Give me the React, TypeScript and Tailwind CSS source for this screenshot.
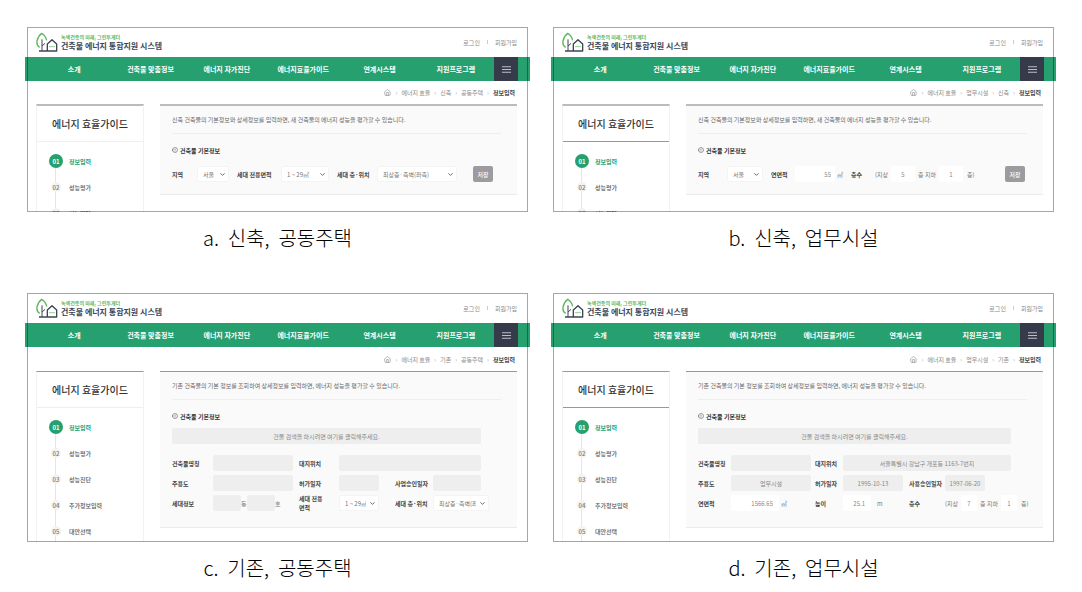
import type { ReactNode } from 'react';
import { FiChevronDown, FiHome, FiInfo, FiMenu } from 'react-icons/fi';

const NAV = ['소개', '건축물 맞춤정보', '에너지 자가진단', '에너지효율가이드', '연계시스템', '지원프로그램'];
const STEPS = ['정보입력', '성능평가', '성능진단', '추가정보입력', '대안선택'];

function Logo() {
  return (
    <svg viewBox="0 0 66 60" className="h-5 w-[22px]" fill="none" strokeWidth="4" strokeLinejoin="round">
      <path d="M11 46C4 42 2 34 3 27C5 17 10 9 17 4C25 9 30 15 32 25" stroke="#5cb85c" />
      <path d="M18 22V57M18 42L27 34" stroke="#3d4456" strokeWidth="3" />
      <path d="M9 57H62V36L48 23L34 36V57" stroke="#3d4456" />
      <path d="M40 44h16" stroke="#5cb85c" strokeWidth="3" strokeDasharray="4 2" />
    </svg>
  );
}

function Label({ children, htmlFor, className }: { children: ReactNode; htmlFor?: string; className: string }) {
  return <label htmlFor={htmlFor} className={`shrink-0 font-bold text-[#444] ${className}`}>{children}</label>;
}

// grey = value filled in by the building search, white = typed by the user
function Field({ id, label, value = '', grey, className }: {
  id: string;
  label?: string;
  value?: string;
  grey?: boolean;
  className: string;
}) {
  return (
    <input
      id={id}
      aria-label={label}
      defaultValue={value}
      readOnly={grey}
      className={`h-4 shrink-0 rounded-xs text-[#888] outline-none ${grey ? 'bg-[#eeeeee]' : 'bg-white'} ${className}`}
    />
  );
}

function Select({ id, value, className }: { id: string; value: string; className: string }) {
  return (
    <div className={`relative shrink-0 ${className}`}>
      <select id={id} className="h-4 w-full appearance-none rounded-xs border border-[#f4f4f4] bg-white pl-[5px] pr-3 text-[#777] outline-none">
        <option>{value}</option>
      </select>
      <FiChevronDown size={7} strokeWidth={3} className="pointer-events-none absolute right-[3px] top-[5px] text-[#555]" />
    </div>
  );
}

function SaveButton({ className }: { className: string }) {
  return <button className={`h-4 w-5 shrink-0 rounded-xs bg-[#9b9ba0] font-medium text-white ${className}`}>저장</button>;
}

function SearchButton({ className }: { className: string }) {
  return (
    <button className={`mb-[11px] h-4 rounded-xs bg-[#eeeeee] text-center text-[#888] ${className}`}>
      건물 검색을 하시려면 여기를 클릭해주세요.
    </button>
  );
}

function Row({ children }: { children: ReactNode }) {
  return <div className="flex h-4 items-center">{children}</div>;
}

function Unit({ children, className }: { children: ReactNode; className: string }) {
  return <span className={`shrink-0 whitespace-nowrap text-[#777] ${className}`}>{children}</span>;
}

function NewHousing() {
  return (
    <Row>
      <Label htmlFor="a-region" className="w-[25px]">지역</Label>
      <Select id="a-region" value="서울" className="w-8" />
      <Label htmlFor="a-area" className="ml-2 w-11">세대 전용면적</Label>
      <Select id="a-area" value="1 ~ 29㎡" className="w-12" />
      <Label htmlFor="a-floor" className="ml-2 w-10">세대 층·위치</Label>
      <Select id="a-floor" value="최상층·측벽(좌측)" className="w-20" />
      <SaveButton className="ml-4" />
    </Row>
  );
}

function NewOffice() {
  return (
    <Row>
      <Label htmlFor="b-region" className="w-[29px]">지역</Label>
      <Select id="b-region" value="서울" className="w-9" />
      <Label htmlFor="b-area" className="ml-2 w-6">연면적</Label>
      <Field id="b-area" value="55" className="w-10 pr-1 text-right" />
      <Unit className="w-4 pl-0.5">㎡</Unit>
      <Label htmlFor="b-up" className="w-6">층수</Label>
      <Unit className="w-4">(지상</Unit>
      <Field id="b-up" value="5" className="w-6 text-center" />
      <Unit className="w-6 text-center">층 지하</Unit>
      <Field id="b-down" label="지하 층수" value="1" className="w-6 text-center" />
      <Unit className="w-6 pl-1">층)</Unit>
      <SaveButton className="ml-[18px]" />
    </Row>
  );
}

function OldHousing() {
  return (
    <>
      <SearchButton className="w-[309px]" />
      <div className="flex flex-col gap-1">
        <Row>
          <Label htmlFor="c-name" className="w-[41px]">건축물명칭</Label>
          <Field id="c-name" grey className="w-20" />
          <Label htmlFor="c-place" className="ml-1.5 w-10">대지위치</Label>
          <Field id="c-place" grey className="w-[142px]" />
        </Row>
        <Row>
          <Label htmlFor="c-use" className="w-[41px]">주용도</Label>
          <Field id="c-use" grey className="w-20" />
          <Label htmlFor="c-permit" className="ml-1.5 w-10">허가일자</Label>
          <Field id="c-permit" grey className="w-10" />
          <Label htmlFor="c-approve" className="ml-4 w-[38px]">사업승인일자</Label>
          <Field id="c-approve" grey className="w-12" />
        </Row>
        <Row>
          <Label htmlFor="c-dong" className="w-[41px]">세대정보</Label>
          <Field id="c-dong" grey className="w-7" />
          <Unit className="w-1.5">동</Unit>
          <Field id="c-ho" label="호" grey className="w-7" />
          <Unit className="w-6">호</Unit>
          <Label htmlFor="c-area" className="w-10 leading-[9px]">세대 전용<br />면적</Label>
          <Select id="c-area" value="1 ~ 29㎡" className="w-10" />
          <Label htmlFor="c-floor" className="ml-4 w-[38px]">세대 층·위치</Label>
          <Select id="c-floor" value="최상층·측벽(좌" className="w-14" />
        </Row>
      </div>
    </>
  );
}

function OldOffice() {
  return (
    <>
      <SearchButton className="w-[313px]" />
      <div className="flex flex-col gap-1">
        <Row>
          <Label htmlFor="d-name" className="w-[33px]">건축물명칭</Label>
          <Field id="d-name" grey className="w-20" />
          <Label htmlFor="d-place" className="ml-1 w-7">대지위치</Label>
          <Field id="d-place" grey value="서울특별시 강남구 개포동 1163-7번지" className="w-[168px] text-center" />
        </Row>
        <Row>
          <Label htmlFor="d-use" className="w-[33px]">주용도</Label>
          <Field id="d-use" grey value="업무시설" className="w-20 text-center" />
          <Label htmlFor="d-permit" className="ml-1 w-7">허가일자</Label>
          <Field id="d-permit" grey value="1995-10-13" className="w-[60px] text-center" />
          <Label htmlFor="d-approve" className="ml-1.5 w-9">사용승인일자</Label>
          <Field id="d-approve" grey value="1997-06-20" className="w-10 text-center" />
        </Row>
        <Row>
          <Label htmlFor="d-area" className="w-[33px]">연면적</Label>
          <Field id="d-area" value="1566.65" className="w-12 pr-1.5 text-right" />
          <Unit className="w-8 pl-0.5">㎡</Unit>
          <Label htmlFor="d-height" className="ml-1 w-7">높이</Label>
          <Field id="d-height" value="25.1" className="w-7 pr-1.5 text-right" />
          <Unit className="w-8 pl-1.5">m</Unit>
          <Label htmlFor="d-up" className="ml-1.5 w-9">층수</Label>
          <Unit className="w-4">(지상</Unit>
          <Field id="d-up" value="7" className="w-4 text-center" />
          <Unit className="w-6 text-center">층 지하</Unit>
          <Field id="d-down" label="지하 층수" value="1" className="w-4 text-center" />
          <Unit className="pl-1">층)</Unit>
        </Row>
      </div>
    </>
  );
}

function Screen({ caption, crumbs, intro, tall, darkRule, children }: {
  caption: string;
  crumbs: string[];
  intro: string;
  tall?: boolean;
  darkRule?: boolean;
  children: ReactNode;
}) {
  const topRule = tall ? 'border-t border-t-[#999]' : 'border-t-2 border-t-[#bbb]';

  return (
    <figure>
      <div className={`relative flex flex-col ${tall ? 'h-[249px]' : 'h-[185px]'}`}>
        <header className="flex h-[30px] shrink-0 items-center justify-between pl-[9px] pr-[11px]">
          <div className="flex items-center gap-[3px]">
            <Logo />
            <div className="font-bold">
              <p className="text-[5px] leading-[8px] text-[#5cb85c]">녹색건축의 미래, 그린투게더</p>
              <p className="text-[8px] leading-[10px] text-[#3d4456]">건축물 에너지 통합지원 시스템</p>
            </div>
          </div>
          <div className="flex items-center gap-[7px] text-[#888]">
            <a href="#login">로그인</a>
            <span className="h-1 w-px bg-[#ccc]" />
            <a href="#join">회원가입</a>
          </div>
        </header>
        <nav className="-mx-0.5 flex h-6 shrink-0 items-center bg-[#26a06e] pl-[11px] pr-3">
          <div className="grid flex-1 grid-cols-6 text-center text-[7px] font-bold text-white">
            {NAV.map((item) => <a key={item} href="#nav" className="whitespace-nowrap">{item}</a>)}
          </div>
          <button aria-label="전체메뉴" className="flex size-6 items-center justify-center bg-[#363b4a] text-[#c8cad0]">
            <FiMenu size={11} />
          </button>
        </nav>
        <div className="min-h-0 flex-1 overflow-hidden pl-[9px] pr-[11px]">
          <div className={`flex items-center justify-end gap-1 pr-0.5 text-[#888] ${tall ? 'h-6' : 'h-[23px]'}`}>
            <FiHome size={7} className="mr-px" />
            {crumbs.map((crumb) => (
              <span key={crumb} className="flex gap-1"><span className="text-[#aaa]">›</span>{crumb}</span>
            ))}
            <span className="text-[#aaa]">›</span>
            <b className="text-[#444]">정보입력</b>
          </div>
          <div className="flex items-start gap-4">
            <aside className={`w-[108px] shrink-0 border-x border-x-[#f2f2f2] ${topRule}`}>
              <h2 className={`flex h-9 items-center justify-center border-b text-[10px] font-medium text-[#333] ${darkRule ? 'border-[#999]' : 'border-[#eee]'}`}>
                에너지 효율가이드
              </h2>
              <ol className="relative flex flex-col pl-3 pt-1.5">
                <li aria-hidden className="absolute bottom-0 left-[18px] top-5 w-px bg-[#e5e5e5]" />
                {STEPS.map((step, i) => (
                  <li key={step} className="relative flex h-[26px] items-center gap-1.5 font-medium">
                    <span className="flex w-3.5 justify-center">
                      <span className={`flex shrink-0 items-center justify-center rounded-full ${i === 0 ? 'size-3.5 bg-[#26a06e] font-bold text-white' : 'size-2.5 bg-[#f3f3f3] text-[#777]'}`}>
                        0{i + 1}
                      </span>
                    </span>
                    <a href="#step" className={i === 0 ? 'font-bold text-[#26a06e]' : 'text-[#555]'}>{step}</a>
                  </li>
                ))}
              </ol>
            </aside>
            <section className={`min-w-0 flex-1 border-b border-b-[#eaeaea] bg-[#fafafa] pl-3 ${topRule} ${tall ? 'pb-4' : 'pb-3'}`}>
              <p className="mr-4 flex h-7 items-center border-b border-[#eee] text-[#666]">{intro}</p>
              <h3 className={`flex items-center gap-0.5 font-bold text-[#333] ${tall ? 'h-7 pt-1' : 'h-8'}`}>
                <FiInfo size={6} className="rotate-180 text-[#444]" />건축물 기본정보
              </h3>
              {children}
            </section>
          </div>
        </div>
        <div className="pointer-events-none absolute inset-0 border border-black/35" />
      </div>
      <figcaption className="mt-3 whitespace-pre text-center text-[20px] font-light leading-7 text-black">{caption}</figcaption>
    </figure>
  );
}

export default function App() {
  return (
    <main className="min-h-screen bg-white pl-[27px] pr-7 pt-[27px] font-['Noto_Sans_CJK_KR',sans-serif] text-[6px] leading-[9px]">
      <div className="grid grid-cols-2 gap-x-[25px] gap-y-[41px]">
        <Screen
          caption="a.  신축,  공동주택"
          crumbs={['에너지 효율', '신축', '공동주택']}
          intro="신축 건축물의 기본정보와 상세정보를 입력하면, 새 건축물의 에너지 성능을 평가할 수 있습니다."
        >
          <NewHousing />
        </Screen>
        <Screen
          caption="b.  신축,  업무시설"
          crumbs={['에너지 효율', '업무시설', '신축']}
          intro="신축 건축물의 기본정보와 상세정보를 입력하면, 새 건축물의 에너지 성능을 평가할 수 있습니다."
          darkRule
        >
          <NewOffice />
        </Screen>
        <Screen
          caption="c.  기존,  공동주택"
          crumbs={['에너지 효율', '기존', '공동주택']}
          intro="기존 건축물의 기본 정보를 조회하여 상세정보를 입력하면, 에너지 성능을 평가할 수 있습니다."
          tall
        >
          <OldHousing />
        </Screen>
        <Screen
          caption="d.  기존,  업무시설"
          crumbs={['에너지 효율', '업무시설', '기존']}
          intro="기존 건축물의 기본 정보를 조회하여 상세정보를 입력하면, 에너지 성능을 평가할 수 있습니다."
          tall
          darkRule
        >
          <OldOffice />
        </Screen>
      </div>
    </main>
  );
}
